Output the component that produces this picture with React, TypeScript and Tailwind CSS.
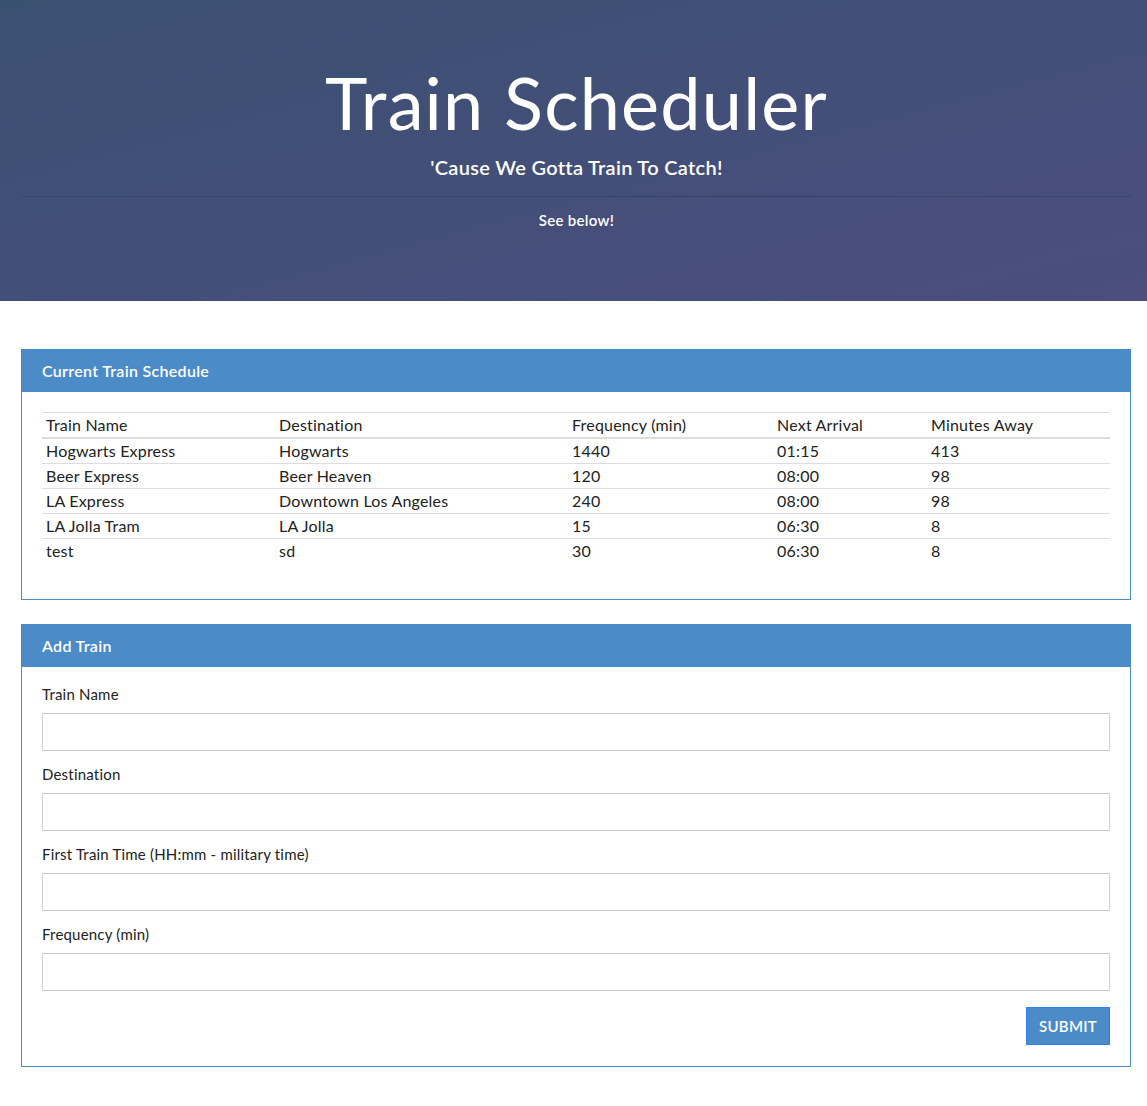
import React from 'react';

type Train = { name: string; destination: string; frequency: string; next: string; away: string };

const trains: Train[] = [
    { name: 'Hogwarts Express', destination: 'Hogwarts', frequency: '1440', next: '01:15', away: '413' },
    { name: 'Beer Express', destination: 'Beer Heaven', frequency: '120', next: '08:00', away: '98' },
    { name: 'LA Express', destination: 'Downtown Los Angeles', frequency: '240', next: '08:00', away: '98' },
    { name: 'LA Jolla Tram', destination: 'LA Jolla', frequency: '15', next: '06:30', away: '8' },
    { name: 'test', destination: 'sd', frequency: '30', next: '06:30', away: '8' },
];

const fields = ['Train Name', 'Destination', 'First Train Time (HH:mm - military time)', 'Frequency (min)'];

const Panel: React.FC<{ title: string; children: React.ReactNode }> = ({ title, children }) => (
    <section className="border border-solid border-[#4a8bc8] bg-white">
        <div className="h-[42px] bg-[#4a8bc8] px-5 flex items-center text-white text-[16px] font-semibold tracking-[0.3px]">{title}</div>
        {children}
    </section>
);

const App: React.FC = () => {
    return (
        <div className="min-h-screen bg-white text-[#222] font-['Lato','Liberation_Sans',sans-serif]">
            {/* jumbotron */}
            <header className="h-[301px] bg-gradient-to-br from-[#3a5071] to-[#4b4e7f] pt-[62px] pl-[22px] pr-[16px] text-white text-center">
                <h1 className="text-[72px] leading-[80px] font-normal tracking-[1.2px]">Train Scheduler</h1>
                <p className="mt-[12px] text-[20px] font-semibold leading-[26px] tracking-[0.3px]">'Cause We Gotta Train To Catch!</p>
                <hr className="mt-[16px] border-t border-[#33456a]" />
                <p className="mt-[12px] text-[15px] font-semibold tracking-[0.3px]">See below!</p>
            </header>

            <main className="pl-[21px] pr-[16px] pt-[48px] pb-10 flex flex-col gap-6">
                <Panel title="Current Train Schedule">
                    <div className="px-5 pt-5 pb-[36px]">
                        <table className="w-full text-[16px] leading-[20px] tracking-[0.2px] border-t border-[#ddd]">
                            <thead>
                                <tr className="border-b-2 border-[#ddd]">
                                    <th className="w-[233px] text-left font-normal px-1 py-[2px]">Train Name</th>
                                    <th className="w-[293px] text-left font-normal px-1 py-[2px]">Destination</th>
                                    <th className="w-[205px] text-left font-normal px-1 py-[2px]">Frequency (min)</th>
                                    <th className="w-[154px] text-left font-normal px-1 py-[2px]">Next Arrival</th>
                                    <th className="text-left font-normal px-1 py-[2px]">Minutes Away</th>
                                </tr>
                            </thead>
                            <tbody>
                                {trains.map((t, i) => (
                                    <tr key={t.name} className={i < trains.length - 1 ? 'border-b border-[#ddd]' : ''}>
                                        <td className="px-1 py-[2px]">{t.name}</td>
                                        <td className="px-1 py-[2px]">{t.destination}</td>
                                        <td className="px-1 py-[2px]">{t.frequency}</td>
                                        <td className="px-1 py-[2px]">{t.next}</td>
                                        <td className="px-1 py-[2px]">{t.away}</td>
                                    </tr>
                                ))}
                            </tbody>
                        </table>
                    </div>
                </Panel>

                <Panel title="Add Train">
                    <form className="px-5 pt-[17px] pb-[21px] flex flex-col" onSubmit={e => e.preventDefault()}>
                        {fields.map(f => (
                            <div key={f} className="mb-[13px]">
                                <label className="block text-[15px] leading-[20px] mb-[9px] tracking-[0.2px]">{f}</label>
                                <input type="text" className="block w-full h-[38px] border border-[#ccccd4] bg-white px-3" />
                            </div>
                        ))}
                        <div className="flex justify-end mt-[3px]">
                            <button type="submit" className="h-[38px] w-[84px] bg-[#4a8bc8] border border-[#2f80ed] text-white text-[15px] font-semibold uppercase tracking-[0.3px]">Submit</button>
                        </div>
                    </form>
                </Panel>
            </main>
        </div>
    );
};

export default App;
